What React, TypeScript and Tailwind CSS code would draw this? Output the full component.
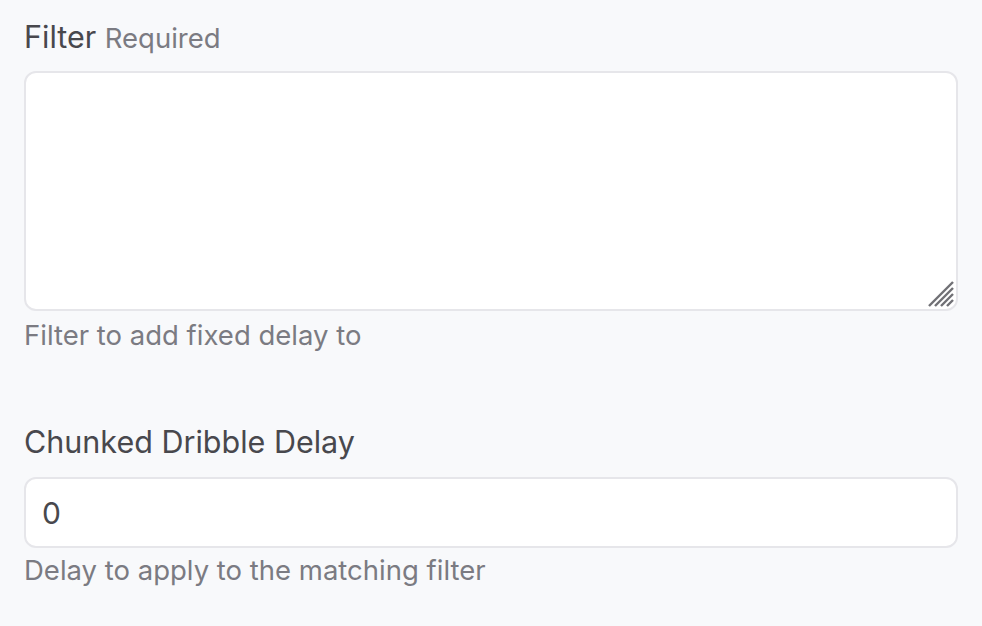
import React from 'react';

function ResizeGrip() {
  return (
    <svg className="pointer-events-none absolute bottom-[3px] right-[3px]" width="28" height="28" viewBox="0 0 28 28">
      <g stroke="#707075" strokeWidth="2.4">
        <line x1="2" y1="26" x2="26" y2="2" />
        <line x1="8" y1="26" x2="26" y2="8" />
        <line x1="14" y1="26" x2="26" y2="14" />
        <line x1="20" y1="26" x2="26" y2="20" />
      </g>
    </svg>
  );
}

export default function App() {
  return (
    <div className="min-h-[626px] w-[982px] bg-[#f8f9fb] px-[24px] pt-[18px] font-['Inter',sans-serif]">
      <div className="flex flex-col">
        <label className="text-[30.5px] leading-[38px] text-[#48484d]">
          Filter <span className="text-[27.5px] text-[#7b7b82]">Required</span>
        </label>
        <div className="relative mt-[14px]">
          <textarea
            className="block h-[240px] w-full resize-none rounded-[12px] border-2 border-[#e6e6ea] bg-white px-[16px] py-[12px] text-[30px] text-[#48484d] outline-none"
          />
          <ResizeGrip />
        </div>
        <p className="mt-[6px] text-[27.5px] leading-[36px] text-[#7b7b82]">Filter to add fixed delay to</p>
      </div>

      <div className="mt-[70px] flex flex-col">
        <label className="text-[30.5px] leading-[38px] text-[#48484d]">Chunked Dribble Delay</label>
        <input
          defaultValue="0"
          className="mt-[16px] block h-[71px] w-full rounded-[12px] border-2 border-[#e6e6ea] bg-white px-[16px] text-[30px] text-[#48484d] outline-none"
        />
        <p className="mt-[4px] text-[27.5px] leading-[36px] text-[#7b7b82]">Delay to apply to the matching filter</p>
      </div>
    </div>
  );
}
